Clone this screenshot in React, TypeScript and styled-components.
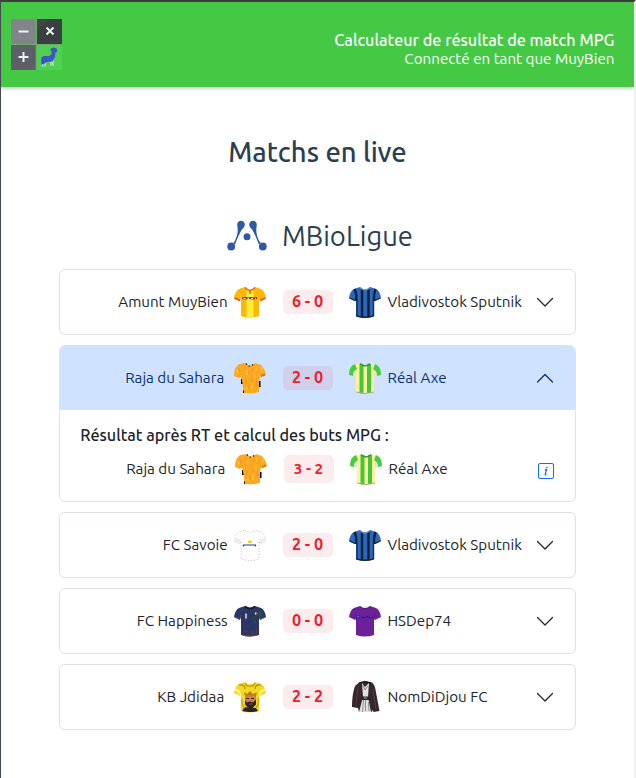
import React, { useState } from "react";
import styled, { createGlobalStyle } from "styled-components";

const Global = createGlobalStyle`
  *, *::before, *::after { box-sizing: border-box; }
  body { margin: 0; background: #fff; color: #212529; font-family: "Ubuntu", "Noto Sans", sans-serif; font-size: 15.2px; line-height: 24px; }
`;

const Page = styled.div`
  height: 778px;
  overflow: hidden;
  border-top: 2px solid #403d40;
  border-left: 1px solid #414a4c;
  border-right: 2px solid #f0f0f0;
`;
const Header = styled.header`
  height: 85px;
  padding: 0 19.5px 0 10px;
  display: flex;
  justify-content: space-between;
  align-items: flex-start;
  background: #45c945;
  color: #fff;
  box-shadow: 0 1px 4px rgba(0, 0, 0, 0.3);
`;
const Logo = styled.svg`
  display: block;
  margin-top: 17px;
`;
const Account = styled.div`
  margin-top: 29px;
  text-align: right;
  line-height: 18px;
`;
const AppName = styled.div`
  font-size: 16.2px;
  line-height: 19px;
  font-weight: 500;
`;
const Title = styled.h1`
  margin: 47px 0 0;
  text-align: center;
  font-size: 27.4px;
  line-height: 36px;
  font-weight: 500;
  color: #2c3e50;
`;
const League = styled.h2`
  margin: 48px 0 0;
  height: 36px;
  padding-left: 226px;
  display: flex;
  align-items: center;
  gap: 15px;
  font-size: 27.4px;
  line-height: 36px;
  font-weight: 400;
  color: #2c3e50;
`;
const List = styled.main`
  margin: 15px 58px 0;
  display: flex;
  flex-direction: column;
  gap: 10px;
`;
const Card = styled.section`
  border: 1px solid #dee2e6;
  border-radius: 6px;
  overflow: hidden;
`;
const Row = styled.div<{ $open?: boolean; $detail?: boolean }>`
  height: ${(p) => (p.$detail ? 36 : p.$open ? 63 : 64)}px;
  margin-top: ${(p) => (p.$detail ? 4 : 0)}px;
  padding-left: ${(p) => (p.$detail ? 1 : 0)}px;
  display: grid;
  grid-template-columns: 168px 38px 17px 50px 16px 38.500px 1fr ${(p) => (p.$detail ? 37 : 38)}px;
  align-items: center;
  background: ${(p) => (p.$open ? "#cfe2ff" : "transparent")};
  color: ${(p) => (p.$open ? "#0c3270" : "#212529")};
`;
const Home = styled.span<{ $inset?: boolean }>`
  text-align: right;
  white-space: nowrap;
  padding-right: ${(p) => (p.$inset ? 3.8 : 0.4)}px;
`;
const Away = styled.span`
  white-space: nowrap;
`;
const ShirtCell = styled.span<{ $end?: boolean }>`
  display: flex;
  padding-left: ${(p) => (p.$end ? 0 : 6)}px;
`;
const Badge = styled.span<{ $open?: boolean; $tall?: boolean }>`
  grid-column: 4;
  height: ${(p) => (p.$tall ? 28 : 24)}px;
  padding-bottom: ${(p) => (p.$tall ? 0 : 2)}px;
  padding-right: 1px;
  border-radius: 5px;
  display: flex;
  align-items: center;
  justify-content: center;
  background: ${(p) => (p.$open ? "#d0d0ec" : "#fdecee")};
  color: #ed1c2e;
  font-size: ${(p) => (p.$tall ? 15.2 : 16.2)}px;
  font-weight: 700;
`;
const Body = styled.div`
  height: 92px;
  border-top: 1px solid #dee2e6;
  padding-top: 13px;
`;
const BodyTitle = styled.h3`
  margin: 0;
  padding-left: 20.3px;
  font-size: 16.2px;
  line-height: 24px;
  font-weight: 500;
`;
const Toggle = styled.button`
  grid-column: 8;
  width: 16px;
  height: 16px;
  padding: 0;
  border: 0;
  background: none;
  color: inherit;
  display: flex;
  cursor: pointer;
`;
const InfoButton = styled(Toggle)`
  color: #0d6efd;
  margin-top: 4px;
`;

const SHAPE = "M11 1 C13 4 19 4 21 1 L27 3 Q31 5 32 12 L26 15 L25 12 L25 30 Q16 33 7 30 L7 12 L6 15 L0 12 Q1 5 5 3 Z";

type Kit = "gold" | "inter" | "sahara" | "axe" | "white" | "navy" | "purple" | "king" | "robe";

function KitArt({ kit }: { kit: Kit }) {
  switch (kit) {
    case "gold":
      return (
        <>
          <path d={SHAPE} fill="#ffb805" />
          <path d="M12.500 3h7v28.500h-7z" fill="#ffed38" />
          <path d="M11 1.500q5 6 10 0M16 5v3" fill="none" stroke="#ef6415" strokeWidth="1.500" />
          <path d="M.5 12l5.500 2.500M31.500 12l-5.500 2.500" stroke="#ef5018" strokeWidth="1.800" />
          <path d="M8 11.500l3-.5 3 .5 3-.5 3 .5 3-.5v2l-4 .5-4-.5-4 .5-3-.5z" fill="#8f2520" />
          <path d="M9.500 12.500h2m2 0h1.500m2 0h2m2 0h1" stroke="#fff" strokeWidth=".9" />
        </>
      );
    case "inter":
      return (
        <>
          <path d={SHAPE} fill="#2868bd" />
          <path d="M5.500 3Q8 8 7 15M13 3v28M19.500 3v28M26.500 3q-2 5-1.500 12" fill="none" stroke="#141e35" strokeWidth="2.400" />
          <path d="M8 14v16M24.500 14v16" stroke="#18305a" strokeWidth="1.500" />
          <path d="M7 29q9 3 18 0v1.500q-9 3-18 0z" fill="#162238" />
          <path d="M.5 12l5.500 2.500M31.500 12l-5.500 2.500" stroke="#182541" strokeWidth="1.300" />
          <path d="M11 1.500q5 5 10 0" fill="none" stroke="#6d8fb8" strokeWidth="1.200" />
        </>
      );
    case "sahara":
      return (
        <>
          <path d="M7 17h2v5H7zM9 28h3v3H9zM24.500 19h2v6h-2z" fill="#000" />
          <path d="M11 1q5 6 10 0l6 2q4 4 5 10l-6 2-1 4v11q-8 2-15 1l-1.500-9L7.500 15 5 16l-5-2Q0 5 5 2z" fill="#fba823" />
          <path d="M5 6l1 5m5-7l-1 4m4 1v4m5-7l-1 4m5-3l-.5 4M12 17v5m3 1v5m3-12l-.5 4m5-2l-.5 7" stroke="#ef9526" strokeWidth="1" />
          <path d="M13 8v5m9-8v4m-4 12v6M3 8l1 4m24-7l-1 5m-14 15v3m8-15v4" stroke="#ffc535" strokeWidth="1.500" />
          <path d="M27 14l4-1.500" stroke="#c08418" strokeWidth="2" />
          <path d="M12 1.500q4 5 8 0" fill="none" stroke="#000" strokeDasharray="1.500 2" strokeWidth="1.200" />
        </>
      );
    case "axe":
      return (
        <>
          <path d={SHAPE} fill="#fff29a" />
          <path d="M6 2Q0 4 0 13l4 1q0-5 4-7zM26 2q6 2 6 11l-4 1q0-5-4-7z" fill="#44ce3e" />
          <path d="M5 9h2v6l-3-1zM27 9h-2v6l3-1z" fill="#dfe3e1" />
          <path d="M10.500 2h4v29.500h-4zM18 2h4v29h-4z" fill="#43c63b" />
          <path d="M11 1.500q5 5 10 0" fill="none" stroke="#2c9838" strokeWidth="1.500" />
          <path d="M7 30q9 3 18 0" fill="none" stroke="#a5a98f" />
        </>
      );
    case "white":
      return (
        <>
          <path d={SHAPE} fill="#fefefe" stroke="#8f8f8f" strokeDasharray="1 2" strokeWidth=".6" />
          <path d="M1 9l6 1-1 4-6-1zM25 10l6-1 1 4-6 1z" fill="#ececec" />
          <path d="M9.500 17.500v-1.500h12v1.500" fill="none" stroke="#2b3b91" strokeWidth="1.200" />
          <path d="M14 12.800h4m-2-1.500v3" stroke="#f8d315" strokeWidth="1.700" />
        </>
      );
    case "navy":
      return (
        <>
          <path d={SHAPE} fill="#2b3667" />
          <path d="M24 6l3-1 1 7-3 2z" fill="#275139" />
          <path d="M18 12l3-2 2 4-3 2z" fill="#1d4b3b" />
          <path d="M7 5l1 1m-2 4l1 1m4 3l1 2m-1 12l1-2 2 3m4 0l1-3m3 2l1-4m-2-8l1 2" stroke="#693c40" strokeWidth="1.200" />
          <path d="M12 8.500v5" stroke="#b9b7b2" strokeWidth="2" />
          <path d="M21 8.500h1.500" stroke="#fff" strokeWidth="1.800" />
          <path d="M22.500 8.500H24" stroke="#f11c31" strokeWidth="1.800" />
          <path d="M11 1.500q5 4 10 0" fill="none" stroke="#131b35" strokeWidth="1.700" />
          <path d="M8 29.500q8 3 16 0" fill="none" stroke="#714239" strokeWidth="1.200" />
          <path d="M.5 12l5.500 2.500M31.500 12l-5.500 2.500" stroke="#426399" />
        </>
      );
    case "purple":
      return (
        <>
          <path d={SHAPE} fill="#6d2199" />
          <path d="M11 1.500q5 4 10 0M6.500 9l.5 6m19-6l-1 6" fill="none" stroke="#551578" />
          <circle cx="9" cy="12" r="1.500" fill="#1515cc" />
          <path d="M9 11v1.500" stroke="#8ba4ff" />
          <path d="M12 12l1.500.7 1.500-.7 1.500.7 2-1.200 2 1h4" fill="none" stroke="#201eb7" strokeWidth="1.100" />
        </>
      );
    case "king":
      return (
        <>
          <path d={SHAPE} fill="#f3d924" />
          <path d="M1 9q4 0 5 4M31 9q-4 0-5 4" fill="none" stroke="#fff47d" strokeWidth="2.500" />
          <path d="M5 4q6-1 6 4M27 4q-6-1-6 4M11 2l2 3h6l2-3" fill="none" stroke="#b58509" strokeWidth="1.100" />
          <path d="M9 29l1-3 12 1 2 3q-8 2-16 0z" fill="#27242b" />
          <path d="M10 11l3 2 3-3 3 3 4-2-1 4H11z" fill="#c07e10" />
          <path d="M11 15q5-2 11 0v7l-3 4h-4l-4-4z" fill="#c98352" />
          <path d="M11 19l2 2.500 3-1 3 1 3-3v5l-4 4-4-1-3-3z" fill="#30221e" />
          <path d="M12 17.500h3m2 0h3" stroke="#302622" strokeWidth="1" />
          <path d="M15 23h3" stroke="#ad6b4e" strokeWidth=".8" />
          <path d="M24 17q2 5-2 10m-14-9q-1 6 3 9" fill="none" stroke="#d1a30d" strokeWidth="1.500" />
        </>
      );
    case "robe":
      return (
        <>
          <path d="M10 1.500l6-1.500 7 1.500q3 2 4 10l3.500 18.500-6 1-1-2-1 2H10l-1-4-6-1Q3 13 6 5z" fill="#35272b" />
          <path d="M13 2l3 4 4-4-1 14 3 15H10l4-15z" fill="#e1e1e5" />
          <path d="M14 4l2 5 3-4M14.500 19l-1 12m3-12v11m3-9l.5 9" fill="none" stroke="#77777f" strokeWidth=".8" />
          <path d="M12 15.500h9v3.500h-9z" fill="#29282f" />
          <path d="M15 17h3" stroke="#aaa" />
          <path d="M9 5L7 24m17-16l3 20" stroke="#5a454b" strokeWidth=".8" />
          <path d="M10 2q6-3 12 0" fill="none" stroke="#111" />
        </>
      );
  }
}

function Shirt({ kit }: { kit: Kit }) {
  return (
    <svg width="32" height="32" viewBox="0 0 32 32">
      <KitArt kit={kit} />
    </svg>
  );
}

interface Match {
  home: string;
  away: string;
  score: string;
  kits: [Kit, Kit];
  inset?: boolean;
  result?: string;
}

const matches: Match[] = [
  { home: "Amunt MuyBien", away: "Vladivostok Sputnik", score: "6 - 0", kits: ["gold", "inter"] },
  { home: "Raja du Sahara", away: "Réal Axe", score: "2 - 0", kits: ["sahara", "axe"], inset: true, result: "3 - 2" },
  { home: "FC Savoie", away: "Vladivostok Sputnik", score: "2 - 0", kits: ["white", "inter"] },
  { home: "FC Happiness", away: "HSDep74", score: "0 - 0", kits: ["navy", "purple"] },
  { home: "KB Jdidaa", away: "NomDiDjou FC", score: "2 - 2", kits: ["king", "robe"], inset: true },
];

function Teams({ match, score, open, tall }: { match: Match; score: string; open?: boolean; tall?: boolean }) {
  return (
    <>
      <Home $inset={match.inset}>{match.home}</Home>
      <ShirtCell>
        <Shirt kit={match.kits[0]} />
      </ShirtCell>
      <Badge $open={open} $tall={tall}>{score}</Badge>
      <span />
      <ShirtCell $end>
        <Shirt kit={match.kits[1]} />
      </ShirtCell>
      <Away>{match.away}</Away>
    </>
  );
}

function MatchCard({ match }: { match: Match }) {
  const [open, setOpen] = useState(Boolean(match.result));
  const expanded = open && Boolean(match.result);
  return (
    <Card>
      <Row $open={expanded}>
        <Teams match={match} score={match.score} open={expanded} />
        <Toggle aria-label="Détails du match" onClick={() => setOpen(!open)}>
          <svg width="16" height="16" viewBox="0 0 16 16" fill="none" stroke="currentColor" strokeWidth="1.300" strokeLinecap="round" strokeLinejoin="round">
            <path d={expanded ? "M.5 12L8 4.500l7.500 7.500" : "M.5 4.500L8 12l7.500-7.500"} />
          </svg>
        </Toggle>
      </Row>
      {expanded && (
        <Body>
          <BodyTitle>Résultat après RT et calcul des buts MPG :</BodyTitle>
          <Row $detail>
            <Teams match={match} score={match.result!} tall />
            <InfoButton aria-label="Informations">
              <svg width="16" height="16" viewBox="0 0 16 16" fill="none" stroke="currentColor">
                <rect x=".5" y=".5" width="15" height="15" rx="1.500" />
                <path d="M6.800 6.800l1.700-.3L7.200 11.500q0 .8 1.300 0" strokeWidth="1.200" />
                <circle cx="8.900" cy="4.500" r=".5" fill="currentColor" strokeWidth=".7" />
              </svg>
            </InfoButton>
          </Row>
        </Body>
      )}
    </Card>
  );
}

export default function App() {
  return (
    <>
      <Global />
      <Page>
        <Header>
          <Logo width="51" height="51" viewBox="0 0 51 51">
            <path d="M0 0h25v25H0z" fill="#818489" />
            <path d="M26 0h25v25H26z" fill="#3a3f42" />
            <path d="M26 0h12L26 12z" fill="#424649" />
            <path d="M0 26h25v25H0z" fill="#5d6067" />
            <path d="M26 26h25v25H26z" fill="#50d052" />
            <path d="M25 0v51M0 25.500h51" stroke="#7b9b7e" strokeWidth=".7" />
            <path d="M7.500 12.500h10M7.500 38h10M12.500 33v10M35.500 8.500l7 7m0-7l-7 7" stroke="#f0f0f0" strokeWidth="2" />
            <path d="M31.500 42v5.500m2.500-6v6m6-7v6m2-6v6.500" stroke="#b9e8d1" strokeWidth="1.300" />
            <path d="M30.500 38.500l2-1.500h6l2-2v-3l-1.500-1.500 2-1.500 1.500-.5 2 .5 1.500 1v3l-1.500.5-.5 4.500-2.500 4.500-6 .5-2.500 2-2.500.5-.5-3z" fill="#4054c9" />
          </Logo>
          <Account>
            <AppName>Calculateur de résultat de match MPG</AppName>
            <div>Connecté en tant que MuyBien</div>
          </Account>
        </Header>
        <Title>Matchs en live</Title>
        <League>
          <svg width="40" height="32" viewBox="0 0 40 32" fill="#3158a2">
            <path d="M10.200 4.800a3.800 3.800 0 1 1 7.400 1q-.6 2-2.600 3.500-3 5-7 15.200L6.500 23q4.500-7 4.200-14z" />
            <path d="M29.800 4.800a3.800 3.800 0 1 0-7.400 1q.6 2 2.600 3.500 3 5 7 15.200l1.500-1.500q-4.500-7-4.200-14z" />
            <circle cx="4.200" cy="26.500" r="3.900" />
            <circle cx="35.800" cy="26.500" r="3.900" />
            <circle cx="20" cy="16.800" r="3.500" />
          </svg>
          MBioLigue
        </League>
        <List>
          {matches.map((match) => (
            <MatchCard key={match.home} match={match} />
          ))}
        </List>
      </Page>
    </>
  );
}
